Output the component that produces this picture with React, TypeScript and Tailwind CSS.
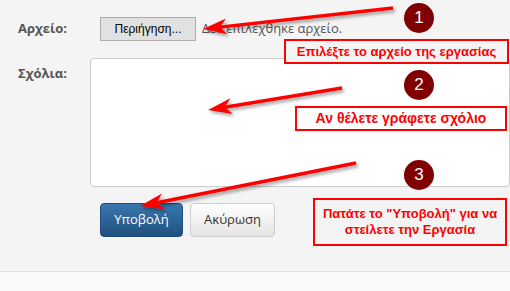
import React from "react";

interface ArrowProps {
  x1: number;
  y1: number;
  x2: number;
  y2: number;
}

// tail (x1,y1) -> tip (x2,y2)
function Arrow({ x1, y1, x2, y2 }: ArrowProps) {
  const dx = x1 - x2;
  const dy = y1 - y2;
  const len = Math.hypot(dx, dy);
  const ux = dx / len;
  const uy = dy / len;
  const nx = -uy;
  const ny = ux;
  const headLen = 24;
  const half = 8;
  const notch = 17;
  const bx = x2 + ux * headLen;
  const by = y2 + uy * headLen;
  const pts = [
    [x2, y2],
    [bx + nx * half, by + ny * half],
    [x2 + ux * notch, y2 + uy * notch],
    [bx - nx * half, by - ny * half],
  ]
    .map((p) => p.join(","))
    .join(" ");

  return (
    <g filter="url(#shadow)">
      <line
        x1={x1}
        y1={y1}
        x2={x2 + ux * notch}
        y2={y2 + uy * notch}
        stroke="#ff0000"
        strokeWidth={3.5}
      />
      <polygon points={pts} fill="#ff0000" />
    </g>
  );
}

function Badge({ n, top }: { n: number; top: number }) {
  return (
    <div
      className="absolute left-[404px] w-[30px] h-[30px] rounded-full bg-[#800000] text-white flex items-center justify-center text-[17px] font-['Liberation_Sans',Arial,sans-serif]"
      style={{ top }}
    >
      {n}
    </div>
  );
}

export default function App() {
  return (
    <div className="relative w-[510px] h-[291px] overflow-hidden bg-[#f4f4f4] flex flex-col font-['Open_Sans',sans-serif]">
      <div className="h-[272px] shrink-0 border-b border-[#dddddd] pt-[17px]">
        {/* file row */}
        <div className="flex items-center h-[24px]">
          <div className="w-[100px] pl-[18px] text-[13px] font-bold text-[#555555]">Αρχείο:</div>
          <button className="h-[24px] w-[96px] border border-[#adadad] bg-[#e1e1e1] text-[12px] text-black font-['Liberation_Sans',Arial,sans-serif]">
            Περιήγηση...
          </button>
          <span className="ml-[6px] text-[13px] text-[#555555]">Δεν επιλέχθηκε αρχείο.</span>
        </div>

        {/* comments row */}
        <div className="flex mt-[17px]">
          <div className="w-[100px] pl-[18px] pt-[5px] text-[13px] leading-[20px] font-bold text-[#555555]">Σχόλια:</div>
          <textarea className="w-[420px] h-[129px] shrink-0 bg-white border border-[#cccccc] rounded-[4px] resize-none outline-none" />
        </div>

        {/* buttons */}
        <div className="flex gap-[7px] mt-[16px] pl-[100px]">
          <button className="h-[34px] w-[83px] rounded-[4px] border border-[#1f4c7a] bg-gradient-to-b from-[#3877b0] to-[#22517f] text-white text-[13px]">
            Υποβολή
          </button>
          <button className="h-[34px] w-[85px] rounded-[4px] border border-[#cccccc] bg-gradient-to-b from-white to-[#e4e4e4] text-[#333333] text-[13px]">
            Ακύρωση
          </button>
        </div>
      </div>
      <div className="flex-1 bg-[#fafafa]" />

      {/* annotations */}
      <div className="absolute left-[284px] top-[39px] w-[225px] h-[25px] border-2 border-[#ff0000] bg-[#f4f4f4] flex items-center justify-center text-[#ff0000] font-bold text-[13px] font-['Liberation_Sans',Arial,sans-serif]">
        Επιλέξτε το αρχείο της εργασίας
      </div>
      <div className="absolute left-[295px] top-[106px] w-[212px] h-[25px] border-2 border-[#ff0000] bg-white flex items-center justify-center text-[#ff0000] font-bold text-[14px] font-['Liberation_Sans',Arial,sans-serif]">
        Αν θέλετε γράφετε σχόλιο
      </div>
      <div className="absolute left-[313px] top-[198px] w-[194px] h-[48px] border-2 border-[#ff0000] bg-[#f4f4f4] flex items-center justify-center text-center text-[#ff0000] font-bold text-[13px] leading-[16px] font-['Liberation_Sans',Arial,sans-serif]">
        Πατάτε το "Υποβολή" για να
        <br />
        στείλετε την Εργασία
      </div>

      <Badge n={1} top={3} />
      <Badge n={2} top={70} />
      <Badge n={3} top={160} />

      <svg className="absolute inset-0 pointer-events-none" width={510} height={291}>
        <defs>
          <filter id="shadow" x="-20%" y="-50%" width="140%" height="200%">
            <feDropShadow dx="2" dy="2.5" stdDeviation="1.5" floodColor="#000" floodOpacity="0.35" />
          </filter>
        </defs>
        <Arrow x1={393} y1={8} x2={203} y2={29} />
        <Arrow x1={342} y1={88} x2={208} y2={110} />
        <Arrow x1={356} y1={163} x2={140} y2={206} />
      </svg>
    </div>
  );
}
